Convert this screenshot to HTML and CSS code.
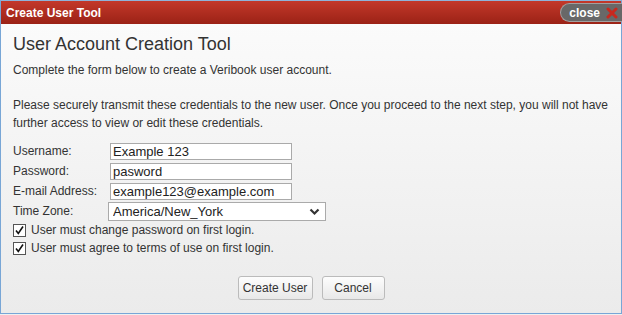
FILE: index.html
```html
<!DOCTYPE html>
<html lang="en">
<head>
  <meta charset="UTF-8">
  <title>Create User Tool</title>
  <link rel="stylesheet" href="styles.css">
</head>
<body>

<div class="dialog">
  <div class="titlebar">
    <span class="title">Create User Tool</span>
    <a href="#" class="close">close
      <svg width="12" height="12" viewBox="0 0 12 12"><path d="M2 2 L10 10 M10 2 L2 10" stroke="#c8281e" stroke-width="3" stroke-linecap="round"/></svg>
    </a>
  </div>

  <div class="content">
    <h2>User Account Creation Tool</h2>
    <p>Complete the form below to create a Veribook user account.</p>
    <p class="last">Please securely transmit these credentials to the new user. Once you proceed to the next step, you will not have further access to view or edit these credentials.</p>

    <div class="form">
      <div class="row">
        <label>Username:</label>
        <input type="text" value="Example 123">
      </div>
      <div class="row">
        <label>Password:</label>
        <input type="text" value="pasword">
      </div>
      <div class="row">
        <label>E-mail Address:</label>
        <input type="text" value="example123@example.com">
      </div>
      <div class="row">
        <label>Time Zone:</label>
        <span class="select-wrap">
          <select><option>America/New_York</option></select>
          <svg class="chevron" width="11" height="8" viewBox="0 0 11 8"><path d="M1.5 1.5 L5.5 5.5 L9.5 1.5" fill="none" stroke="#333" stroke-width="2.2"/></svg>
        </span>
      </div>
      <div class="check-row">
        <span class="check"><svg width="11" height="11" viewBox="0 0 11 11"><path d="M2 5.5 L4.3 8.5 L9 1.5" fill="none" stroke="#111" stroke-width="1.6"/></svg></span>
        User must change password on first login.
      </div>
      <div class="check-row">
        <span class="check"><svg width="11" height="11" viewBox="0 0 11 11"><path d="M2 5.5 L4.3 8.5 L9 1.5" fill="none" stroke="#111" stroke-width="1.6"/></svg></span>
        User must agree to terms of use on first login.
      </div>
    </div>

    <div class="buttons">
      <button class="btn-create">Create User</button>
      <button class="btn-cancel">Cancel</button>
    </div>
  </div>
</div>

</body>
</html>
```

FILE: styles.css
```css
body {
  margin: 0;
  font-family: "Liberation Sans", Arial, sans-serif;
  background: #f0f0f0;
  color: #333;
}
.dialog {
  width: 620px;
  height: 312px;
  border: 1px solid #78a6d6;
  border-top-color: #8fb3d9;
  background: linear-gradient(#fcfcfc, #ebebeb);
  display: flex;
  flex-direction: column;
}
.titlebar {
  height: 23px;
  background: linear-gradient(#c3382a, #9b2216);
  display: flex;
  align-items: center;
  justify-content: space-between;
  padding-left: 5px;
}
.title {
  color: #fff;
  font-weight: bold;
  font-size: 12px;
}
.close {
  display: flex;
  align-items: center;
  gap: 6px;
  height: 17px;
  padding: 0 4px 0 8px;
  margin-right: -1px;
  background: #686868;
  border: 1px solid #a0a0a0;
  border-right: none;
  border-radius: 10px 0 0 10px;
  color: #fff;
  font-weight: bold;
  font-size: 12px;
  text-decoration: none;
}
.content {
  padding: 10px 12px 0 12px;
  flex: 1;
}
h2 {
  font-weight: normal;
  font-size: 18px;
  margin: 0 0 6px;
  color: #333;
}
p {
  font-size: 12px;
  line-height: 18px;
  margin: 0 0 17px;
}
p.last {
  margin-bottom: 9px;
}
.form {
  font-size: 12px;
}
.row {
  display: flex;
  align-items: center;
  height: 20px;
}
.row label {
  width: 97px;
}
input {
  width: 176px;
  height: 15px;
  padding: 0 2px;
  border: 1px solid #aaa;
  background: #fff;
  font-family: inherit;
  font-size: 13px;
  color: #222;
  margin: 0;
}
.select-wrap {
  position: relative;
  margin-left: -2px;
}
select {
  appearance: none;
  width: 218px;
  height: 19px;
  padding: 0 4px;
  border: 1px solid #aaa;
  border-radius: 0;
  background: #fff;
  font-family: inherit;
  font-size: 13px;
  color: #222;
}
.chevron {
  position: absolute;
  right: 6px;
  top: 6px;
}
.check-row {
  display: flex;
  align-items: center;
  gap: 5px;
  height: 18px;
  font-size: 12px;
}
.check {
  width: 11px;
  height: 11px;
  border: 1px solid #555;
  background: #fff;
  display: flex;
}
.buttons {
  display: flex;
  justify-content: center;
  gap: 9px;
  margin-top: 19px;
}
button {
  height: 24px;
  padding: 0;
  border: 1px solid #bbb;
  border-radius: 3px;
  background: linear-gradient(#fdfdfd, #e8e8e8);
  font-family: inherit;
  font-size: 12px;
  color: #333;
}
.btn-create {
  width: 75px;
}
.btn-cancel {
  width: 63px;
}
```
